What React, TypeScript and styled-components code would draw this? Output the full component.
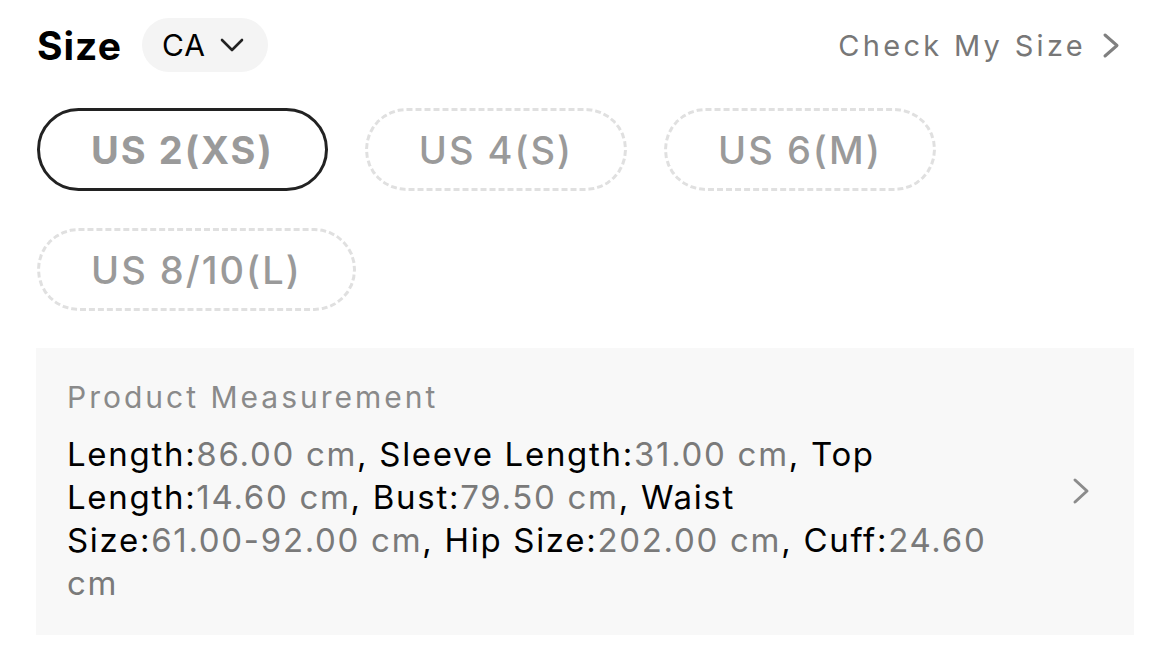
import React from "react";
import styled, { createGlobalStyle } from "styled-components";

const Global = createGlobalStyle`
  html, body { margin: 0; padding: 0; background: #ffffff; }
  body { font-family: Inter, "Noto Sans", "Liberation Sans", sans-serif; -webkit-font-smoothing: antialiased; }
`;

const Page = styled.div`
  width: 1170px;
  box-sizing: border-box;
  padding: 18px 36px 0 37px;
  display: flex;
  flex-direction: column;
`;

const Header = styled.div`
  display: flex;
  align-items: center;
  justify-content: space-between;
  height: 54px;
`;

const HeaderLeft = styled.div`
  display: flex;
  align-items: center;
  gap: 20px;
`;

const Title = styled.span`
  font-size: 39px;
  font-weight: 700;
  color: #000;
  letter-spacing: 1px;
`;

const RegionPill = styled.button`
  display: flex;
  align-items: center;
  gap: 14px;
  height: 54px;
  padding: 0 24px 0 20px;
  border: none;
  border-radius: 27px;
  background: #f4f4f4;
  font-family: inherit;
  font-size: 30px;
  letter-spacing: 1px;
  color: #000;
`;

const CheckLink = styled.a`
  display: flex;
  align-items: center;
  gap: 16px;
  font-size: 29px;
  letter-spacing: 3.3px;
  color: #777;
  text-decoration: none;
  padding-right: 14px;
`;

const Chips = styled.div`
  display: flex;
  flex-wrap: wrap;
  gap: 37px 37px;
  margin-top: 36px;
  max-width: 960px;
`;

const Chip = styled.div<{ $selected?: boolean }>`
  box-sizing: border-box;
  height: 83px;
  padding: 0 51px;
  display: flex;
  align-items: center;
  justify-content: center;
  border-radius: 42px;
  border: 3px ${(p) => (p.$selected ? "solid #222" : "dashed #e0e0e0")};
  font-size: 38px;
  letter-spacing: 2px;
  font-weight: ${(p) => (p.$selected ? 700 : 500)};
  color: #9a9a9a;
`;

const Panel = styled.div`
  margin-top: 37px;
  margin-left: -1px;
  background: #f8f8f8;
  padding: 29px 44px 30px 31px;
  display: flex;
  align-items: center;
`;

const PanelBody = styled.div`
  flex: 1;
  max-width: 945px;
`;

const PanelTitle = styled.div`
  font-size: 30px;
  letter-spacing: 3px;
  color: #8a8a8a;
  line-height: 40px;
  margin-bottom: 16px;
`;

const Measures = styled.div`
  font-size: 33px;
  letter-spacing: 1.7px;
  line-height: 43px;
  color: #000;
`;

const Value = styled.span`
  color: #7a7a7a;
`;

const Num = styled.span`
  white-space: nowrap;
`;

const PanelArrow = styled.div`
  margin-left: auto;
  display: flex;
  align-items: center;
`;

const DownChevron = () => (
  <svg width="24" height="14" viewBox="0 0 24 14" fill="none" stroke="#222" strokeWidth="2.6" strokeLinecap="round" strokeLinejoin="round">
    <polyline points="2 2 12 12 22 2" />
  </svg>
);

const RightChevron = ({ color, w, h, sw }: { color: string; w: number; h: number; sw: number }) => (
  <svg width={w} height={h} viewBox={`0 0 ${w} ${h}`} fill="none" stroke={color} strokeWidth={sw} strokeLinecap="round" strokeLinejoin="round">
    <polyline points={`${sw} ${sw} ${w - sw} ${h / 2} ${sw} ${h - sw}`} />
  </svg>
);

const items: [string, string][] = [
  ["Length:", "86.00"],
  ["Sleeve Length:", "31.00"],
  ["Top Length:", "14.60"],
  ["Bust:", "79.50"],
  ["Waist Size:", "61.00-92.00"],
  ["Hip Size:", "202.00"],
  ["Cuff:", "24.60"],
];

export default function App() {
  return (
    <>
      <Global />
      <Page>
        <Header>
          <HeaderLeft>
            <Title>Size</Title>
            <RegionPill>
              CA
              <DownChevron />
            </RegionPill>
          </HeaderLeft>
          <CheckLink>
            Check My Size
            <RightChevron color="#808080" w={18} h={27} sw={3} />
          </CheckLink>
        </Header>
        <Chips>
          <Chip $selected>US 2(XS)</Chip>
          <Chip>US 4(S)</Chip>
          <Chip>US 6(M)</Chip>
          <Chip>US 8/10(L)</Chip>
        </Chips>
        <Panel>
          <PanelBody>
            <PanelTitle>Product Measurement</PanelTitle>
            <Measures>
              {items.map(([k, v], i) => (
                <React.Fragment key={k}>
                  {k}
                  <Value>
                    <Num>{v}</Num> cm
                  </Value>
                  {i < items.length - 1 ? ", " : ""}
                </React.Fragment>
              ))}
            </Measures>
          </PanelBody>
          <PanelArrow>
            <RightChevron color="#8c8c8c" w={18} h={28} sw={3} />
          </PanelArrow>
        </Panel>
      </Page>
    </>
  );
}
